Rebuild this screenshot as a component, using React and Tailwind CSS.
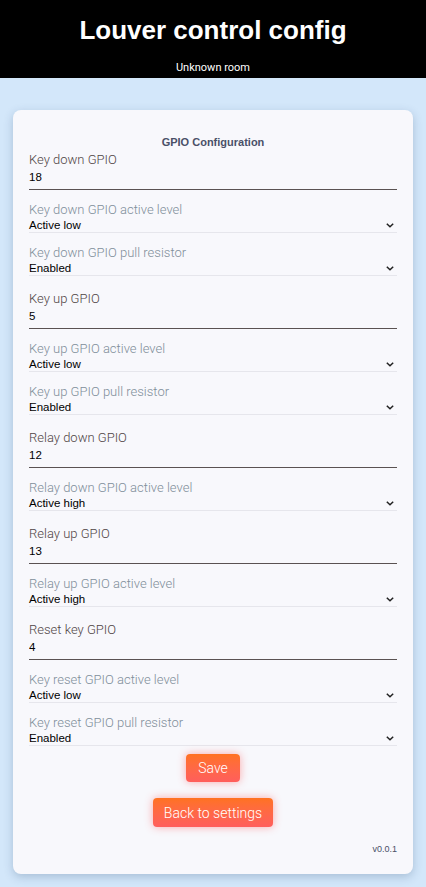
import React from "react";

const fields = [
  { t: "text", label: "Key down GPIO", value: "18" },
  { t: "select", label: "Key down GPIO active level", value: "Active low" },
  { t: "select", label: "Key down GPIO pull resistor", value: "Enabled" },
  { t: "text", label: "Key up GPIO", value: "5" },
  { t: "select", label: "Key up GPIO active level", value: "Active low" },
  { t: "select", label: "Key up GPIO pull resistor", value: "Enabled" },
  { t: "text", label: "Relay down GPIO", value: "12" },
  { t: "select", label: "Relay down GPIO active level", value: "Active high" },
  { t: "text", label: "Relay up GPIO", value: "13" },
  { t: "select", label: "Relay up GPIO active level", value: "Active high" },
  { t: "text", label: "Reset key GPIO", value: "4" },
  { t: "select", label: "Key reset GPIO active level", value: "Active low" },
  { t: "select", label: "Key reset GPIO pull resistor", value: "Enabled" },
];

function Chevron() {
  return (
    <svg width="8" height="5" viewBox="0 0 8 5" className="mr-[3px]">
      <path d="M0.8 0.8 L4 3.8 L7.2 0.8" fill="none" stroke="#222" strokeWidth="1.5" />
    </svg>
  );
}

function TextField({ label, value, first }) {
  return (
    <div className={first ? "" : "mt-[15px]"}>
      <div className="font-['Roboto',sans-serif] font-light text-[13px] leading-[16px] text-[#4f4444]">{label}</div>
      <input
        defaultValue={value}
        className="block w-full h-[22px] pb-[3px] border-0 border-b border-[#5a5252] bg-transparent outline-none font-['Liberation_Sans',Arial,sans-serif] text-[11.5px] text-black p-0"
      />
    </div>
  );
}

function SelectField({ label, value }) {
  return (
    <div className="mt-[12px]">
      <div className="font-['Roboto',sans-serif] font-light text-[13px] leading-[16px] text-[#7f8e9a]">{label}</div>
      <div className="flex items-center justify-between h-[15px] border-b border-[#e6e6ec]">
        <span className="font-['Liberation_Sans',Arial,sans-serif] text-[11.5px] leading-[14px] text-black">{value}</span>
        <Chevron />
      </div>
    </div>
  );
}

export default function App() {
  return (
    <div className="min-h-screen bg-[#d3e7fa]">
      <header className="bg-black h-[78px] flex flex-col items-center">
        <h1 className="mt-[16px] font-['Liberation_Sans',Arial,sans-serif] font-bold text-[26px] leading-[28px] text-white">
          Louver control config
        </h1>
        <div className="mt-[17px] font-['Roboto',sans-serif] text-[11px] leading-[13px] text-white">Unknown room</div>
      </header>
      <div className="px-[13px] pt-[32px] pb-[14px]">
        <div className="bg-[#f8f8fc] rounded-[8px] shadow-[0_3px_10px_rgba(40,70,110,0.25)] px-[16px] pt-[26px] pb-[19px]">
          <div className="text-center font-['Liberation_Sans',Arial,sans-serif] font-bold text-[11px] leading-[13px] text-[#4a5068] mb-[3px]">
            GPIO Configuration
          </div>
          {fields.map((f, i) =>
            f.t === "text" ? (
              <TextField key={i} label={f.label} value={f.value} first={i === 0} />
            ) : (
              <SelectField key={i} label={f.label} value={f.value} />
            )
          )}
          <div className="flex flex-col items-center mt-[8px]">
            <button className="px-3 h-[28px] rounded-[4px] bg-gradient-to-b from-[#ff7220] to-[#ff5e5c] text-white font-['Roboto',sans-serif] font-light text-[14px] leading-[16px] shadow-[0_0_8px_rgba(255,70,70,0.45)]">
              Save
            </button>
            <div className="mt-[16px]">
              <button className="px-[11px] h-[29px] rounded-[4px] bg-gradient-to-b from-[#ff7220] to-[#ff5e5c] text-white font-['Roboto',sans-serif] font-light text-[14px] leading-[16px] shadow-[0_0_8px_rgba(255,70,70,0.45)]">
                Back to settings
              </button>
            </div>
          </div>
          <div className="mt-[17px] text-right font-['Liberation_Sans',Arial,sans-serif] text-[9px] leading-[11px] text-[#4a5068]">
            v0.0.1
          </div>
        </div>
      </div>
    </div>
  );
}
